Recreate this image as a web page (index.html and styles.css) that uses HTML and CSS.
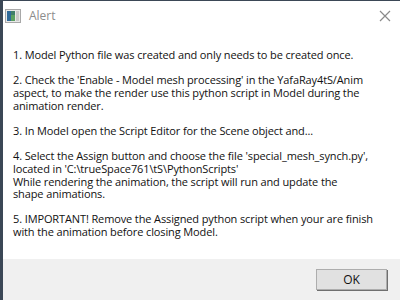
FILE: index.html
```html
<!DOCTYPE html>
<html lang="en">
<head>
  <meta charset="UTF-8">
  <title>Alert</title>
  <link rel="stylesheet" href="styles.css">
</head>
<body>
  <div class="window">
    <div class="title-bar">
      <svg class="app-icon" width="16" height="14" viewBox="0 0 16 14">
        <rect x="0.5" y="0.5" width="15" height="13" fill="#e8e8e8" stroke="#a8a8a8"/>
        <rect x="2" y="2" width="8" height="10" fill="#3f7f6a"/>
        <rect x="2" y="2" width="4" height="10" fill="#2f6a9a"/>
        <rect x="6" y="6" width="4" height="6" fill="#5aa060"/>
        <rect x="11" y="2" width="3" height="10" fill="#c9c9c9"/>
      </svg>
      <span class="title">Alert</span>
      <svg class="close" width="12" height="12" viewBox="0 0 12 12">
        <path d="M1 1 L11 11 M11 1 L1 11" stroke="#8a8a8a" stroke-width="1.2"/>
      </svg>
    </div>
    <div class="message">
      <p>1. Model Python file was created and only needs to be created once.</p>
      <p>2. Check the 'Enable - Model mesh processing' in the YafaRay4tS/Anim<br>aspect, to make the render use this python script in Model during the<br>animation render.</p>
      <p>3. In Model open the Script Editor for the Scene object and...</p>
      <p>4. Select the Assign button and choose the file 'special_mesh_synch.py',<br>located in 'C:\trueSpace761\tS\PythonScripts'<br>While rendering the animation, the script will run and update the<br>shape animations.</p>
      <p>5. IMPORTANT! Remove the Assigned python script when your are finish<br>with the animation before closing Model.</p>
    </div>
    <div class="footer">
      <button class="ok-button">OK</button>
    </div>
  </div>
</body>
</html>
```

FILE: styles.css
```css
body {
  margin: 0;
  font-family: "Open Sans", "Noto Sans", sans-serif;
  background: #fff;
}

.window {
  height: 300px;
  box-sizing: border-box;
  border-top: 1px solid #3b4756;
  border-left: 3px solid #3b4756;
  display: flex;
  flex-direction: column;
  background: #fff;
}

.title-bar {
  height: 29px;
  display: flex;
  align-items: center;
  padding: 0 0 0 2px;
}

.app-icon {
  margin-right: 8px;
}

.title {
  font-size: 12px;
  color: #8c8c8c;
  flex: 1;
}

.close {
  margin-right: 9px;
}

.message {
  flex: 1;
  padding: 19px 0 0 10px;
  font-size: 11px;
  line-height: 12.65px;
  letter-spacing: -0.12px;
  white-space: nowrap;
  color: #111;
}

.message p {
  margin: 0 0 12.65px 0;
}

.footer {
  height: 41px;
  background: #f0f0f0;
  display: flex;
  justify-content: flex-end;
  align-items: flex-start;
  padding: 10px 13px 0 0;
  box-sizing: border-box;
}

.ok-button {
  width: 71px;
  height: 21px;
  font-family: inherit;
  font-size: 12px;
  color: #111;
  background: #e1e1e1;
  border: 1px solid #adadad;
  box-shadow: 1px 1px 0 #6f6f6f;
  padding: 0;
}
```
